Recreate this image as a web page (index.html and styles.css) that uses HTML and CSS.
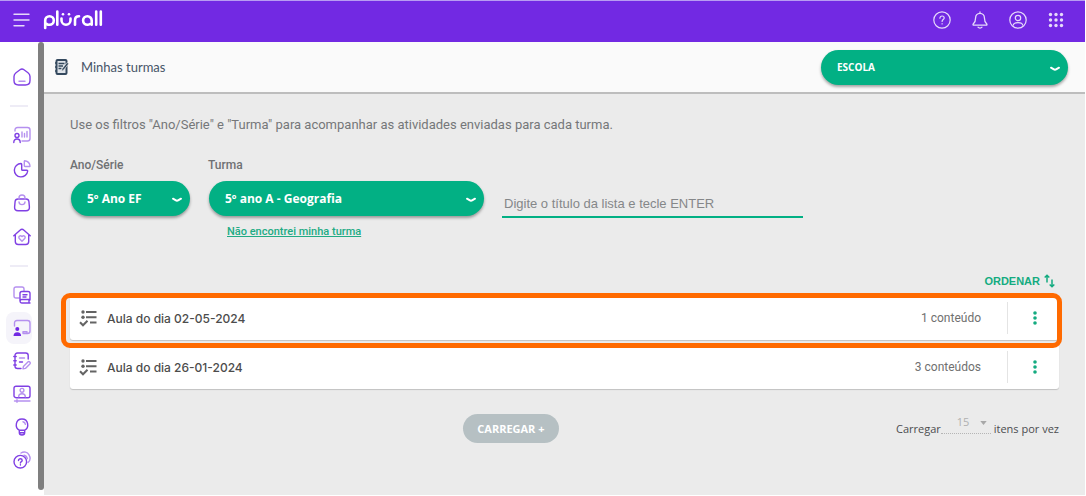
FILE: index.html
```html
<!DOCTYPE html>
<html lang="pt-BR">
<head>
<meta charset="utf-8">
<title>Plurall - Minhas turmas</title>
<link rel="stylesheet" href="styles.css">
</head>
<body>
<div class="app">
  <header class="appbar">
    <button class="icon-btn menu-btn" type="button" aria-label="Menu">
      <svg width="17" height="14" viewBox="0 0 17 14" fill="none" stroke="currentColor" stroke-width="1.4" stroke-linecap="round"><path d="M1 1.200h15M1 7h15M1 12.800h10"/></svg>
    </button>
    <a class="brand" href="#" aria-label="plurall">
      <svg width="60" height="20" viewBox="0 0 60 20" fill="none" stroke="#fff" stroke-width="2.600" stroke-linecap="round"><path d="M2.200 18v-7.500a4.300 4.300 0 1 1 4.300 4.300c-1 0-2-.3-2.700-.9M14.300 1.500v13.300M18.500 8.500v1.700a4.500 4.500 0 0 0 9 0V8.500M32 14.800v-4.500c0-2.600 1.600-4 4-4M48.700 14.800v-4.300a4.300 4.300 0 1 0-4.300 4.300c1 0 1.800-.3 2.500-.8M53.200 1.500v13.300M57.800 1.500v13.300"/><circle cx="20" cy="4.300" r="1.300" fill="#fff" stroke="none"/><circle cx="26" cy="4.300" r="1.300" fill="#fff" stroke="none"/></svg>
    </a>
    <div class="appbar-actions">
      <button class="icon-btn" type="button" aria-label="Ajuda">
        <svg width="18" height="18" viewBox="0 0 18 18" fill="none" stroke="currentColor" stroke-width="1.200" stroke-linecap="round"><circle cx="9" cy="9" r="8.200"/><path d="M6.900 7.200c0-1.300.9-2.200 2.200-2.200s2.100.8 2.100 2c0 1.600-2.100 1.600-2.100 3.400M9.100 12.700v.2"/></svg>
      </button>
      <button class="icon-btn" type="button" aria-label="Notificações">
        <svg width="18" height="18" viewBox="0 0 18 18" fill="none" stroke="currentColor" stroke-width="1.300" stroke-linecap="round" stroke-linejoin="round"><path d="M9 1v1.300M9 2.300c-2.800 0-4.400 2-4.400 4.500 0 3.400-.8 4.800-2.200 6-.7.700-.4 1.400.4 1.400h12.400c.8 0 1.100-.7.400-1.400-1.400-1.200-2.200-2.600-2.200-6 0-2.500-1.600-4.500-4.400-4.500zM7 16.200c1 1.200 3 1.200 4 0"/></svg>
      </button>
      <button class="icon-btn" type="button" aria-label="Perfil">
        <svg width="18" height="18" viewBox="0 0 18 18" fill="none" stroke="currentColor" stroke-width="1.200"><circle cx="9" cy="9" r="8.200"/><circle cx="9" cy="7" r="2.700"/><path d="M4.300 14.500c0-2 1.700-2.900 4.700-2.900s4.700.9 4.700 2.900"/></svg>
      </button>
      <button class="icon-btn" type="button" aria-label="Aplicativos">
        <svg width="18" height="18" viewBox="0 0 18 18" fill="currentColor"><circle cx="3.500" cy="3.500" r="1.700"/><circle cx="9" cy="3.500" r="1.700"/><circle cx="14.500" cy="3.500" r="1.700"/><circle cx="3.500" cy="9" r="1.700"/><circle cx="9" cy="9" r="1.700"/><circle cx="14.500" cy="9" r="1.700"/><circle cx="3.500" cy="14.500" r="1.700"/><circle cx="9" cy="14.500" r="1.700"/><circle cx="14.500" cy="14.500" r="1.700"/></svg>
      </button>
    </div>
  </header>

  <div class="body">
    <aside class="sidebar">
      <nav class="nav" aria-label="Principal">
        <a class="nav-item" href="#" aria-label="Início"><svg class="nav-icon" viewBox="0 0 18 18"><path d="M7 1.800 3 4.700C1.600 5.800 1 6.900 1 8.500v4C1 15.600 2.400 17 5.500 17h7c3.100 0 4.500-1.400 4.500-4.500v-4c0-1.600-.6-2.700-2-3.800l-4-2.900c-1.400-1-2.600-1-4 0z"/><path class="soft" d="M6 13.200h6"/></svg></a>
        <hr class="nav-divider">
        <div class="nav-group nav-group-wide">
          <a class="nav-item" href="#" aria-label="Desempenho"><svg class="nav-icon" viewBox="0 0 18 18"><path class="soft" d="M2 5V4c0-1.600.9-2.500 2.500-2.500h10C16.100 1.500 17 2.400 17 4v8.500c0 1.600-.9 2.500-2.500 2.500H9M9 6v5M11.500 7.500V11M14 5.500V11"/><circle cx="4" cy="9.500" r="2"/><path d="M.8 16.500c0-2.200 1-3.500 3.200-3.500s3.200 1.300 3.200 3.500"/></svg></a>
          <a class="nav-item" href="#" aria-label="Relatórios"><svg class="nav-icon" viewBox="0 0 18 18"><path d="M8 3.500a6.700 6.700 0 1 0 6.700 7.500c0-.5-.2-.8-.8-.8H9.500c-.6 0-.8-.2-.8-.8V4.300c0-.5-.2-.8-.7-.8z"/><path class="soft" d="M11.300 1.200c0-.4.300-.6.700-.5 2.800.5 4.600 2.300 5 5 .1.500-.1.800-.6.800H12c-.5 0-.7-.2-.7-.7z"/></svg></a>
          <a class="nav-item" href="#" aria-label="Loja"><svg class="nav-icon" viewBox="0 0 18 18"><path d="M5 5h8c1.800 0 2.700.8 2.900 2.500l.5 5.500c.2 2.500-1 3.800-3.400 3.800H5c-2.400 0-3.600-1.300-3.400-3.800l.5-5.500C2.300 5.800 3.200 5 5 5z"/><path class="soft" d="M6 5V4a3 3 0 0 1 6 0v1M6 8c.3 3.500 5.700 3.500 6 0"/></svg></a>
          <a class="nav-item" href="#" aria-label="Família"><svg class="nav-icon" viewBox="0 0 18 18"><path d="M.8 7.800 7 2.200c1.500-1.300 2.500-1.300 4 0l6.200 5.600M2.300 7v6.500c0 2 1 3 3 3h7.400c2 0 3-1 3-3V7"/><path class="soft" d="M9 13.200 6.300 10.500c-1.500-1.800 1-4 2.700-1.900 1.700-2.100 4.200.1 2.700 1.900z"/></svg></a>
        </div>
        <hr class="nav-divider">
        <div class="nav-group">
          <a class="nav-item" href="#" aria-label="Livros"><svg class="nav-icon" viewBox="0 0 18 18"><path class="soft" d="M6 12H3c-1.300 0-2-.7-2-2V3c0-1.300.7-2 2-2h6c1.300 0 2 .7 2 2v2"/><path d="M17 14V7.500c0-1.300-.7-2-2-2H9c-1.300 0-2 .7-2 2V15M17 13.500H8.700c-2.200 0-2.200 3.500 0 3.500H17M10 8.700h4M10 11h3M16 13.700V17"/></svg></a>
          <a class="nav-item nav-item-active" href="#" aria-label="Minhas turmas" aria-current="page"><svg class="nav-icon" viewBox="0 0 18 18"><path class="soft" d="M1.500 7V4c0-1.600.9-2.500 2.500-2.500h10.500C16.100 1.500 17 2.400 17 4v8c0 1.600-.9 2.500-2.500 2.500H10M10 14v-1.200h4V14"/><circle class="solid" cx="4.300" cy="10" r="2"/><path class="solid" d="M.5 17c0-2.500 1.300-3.800 3.800-3.800S8.100 14.500 8.100 17z"/></svg></a>
          <a class="nav-item" href="#" aria-label="Diário"><svg class="nav-icon" viewBox="0 0 18 18"><path d="M8 16.500H4.500c-1.600 0-2.500-.9-2.500-2.500V3.500C2 1.900 2.900 1 4.500 1h8.200c1.600 0 2.500.9 2.500 2.500V7M.8 4.500h2.400M.8 8.700h2.400M.8 13h2.400M6.500 10h3"/><path class="soft" d="M6.500 6h5M10 16.800l.4-2.400 4.500-4.500c1.300-1 3 .7 2 2l-4.500 4.500z"/></svg></a>
          <a class="nav-item" href="#" aria-label="Aulas ao vivo"><svg class="nav-icon" viewBox="0 0 18 18"><rect x="1" y="1.200" width="16" height="11.500" rx="2"/><circle class="soft" cx="9" cy="5.300" r="1.900"/><path class="soft" d="M5.700 11.800c0-2 1.200-3 3.300-3s3.300 1 3.300 3M1.500 16H17M4 14.700v2.600"/></svg></a>
          <a class="nav-item" href="#" aria-label="Dicas"><svg class="nav-icon" viewBox="0 0 18 18"><path d="M6.200 12.200C1.500 9.500 2.500 1 9 1s7.500 8.500 2.800 11.200zM6.300 12.500v2c0 1.700.8 2.500 2.700 2.500s2.700-.8 2.700-2.500v-2M6.500 14.700h5"/><path class="soft" d="M10 3.800c1.500.3 2.200 1.200 2.400 2.500"/></svg></a>
          <a class="nav-item" href="#" aria-label="Suporte"><svg class="nav-icon" viewBox="0 0 18 18"><circle cx="7.300" cy="10.700" r="6.300"/><path d="M5.500 9.500c0-2.300 3.700-2.200 3.700 0 0 1.200-1.800 1.200-1.800 2.500M7.400 13.800v.2"/><path class="soft" d="M8 2c3-2 6.500-.8 8 1.800 1.700 3 1 6-1 7.700M11 4.300c1.700.4 3 1.700 3.300 3.300"/></svg></a>
        </div>
      </nav>
      <div class="scroll-thumb"></div>
    </aside>

    <main class="main">
      <div class="titlebar">
        <svg class="title-icon" width="14" height="16" viewBox="0 0 14 16"><rect x="1.500" y="1" width="10" height="14" rx="1" fill="#dfe4ea" stroke="#34495e" stroke-width="2"/><path d="M0 4h2M0 8h2M0 12h2M3.500 4.500h6M3.500 7h4.500M3.500 9.500h3" stroke="#34495e" stroke-width="1.300"/><path d="m6.500 12.500.6-2.800 5-6.200 1.600 1.300-5 6.200z" fill="#34495e" stroke="#fafafa" stroke-width=".6"/></svg>
        <h1 class="title">Minhas turmas</h1>
        <div class="pill pill-school">
          <select class="pill-select" aria-label="Escola"><option>ESCOLA</option></select>
          <svg class="pill-arrow" viewBox="0 0 12 6"><path d="M2 1.700 4.500 3.200c1 .6 2 .6 3 0L10 1.700"/></svg>
        </div>
      </div>

      <div class="content">
        <p class="intro">Use os filtros "Ano/Série" e "Turma" para acompanhar as atividades enviadas para cada turma.</p>
        <div class="filters">
          <div class="field field-year">
            <label class="field-label" for="ano">Ano/Série</label>
            <div class="pill">
              <select class="pill-select" id="ano"><option>5º Ano EF</option></select>
              <svg class="pill-arrow" viewBox="0 0 12 6"><path d="M2 1.700 4.500 3.200c1 .6 2 .6 3 0L10 1.700"/></svg>
            </div>
          </div>
          <div class="field field-class">
            <label class="field-label" for="turma">Turma</label>
            <div class="pill">
              <select class="pill-select" id="turma"><option>5º ano A - Geografia</option></select>
              <svg class="pill-arrow" viewBox="0 0 12 6"><path d="M2 1.700 4.500 3.200c1 .6 2 .6 3 0L10 1.700"/></svg>
            </div>
            <a class="help-link" href="#">Não encontrei minha turma</a>
          </div>
          <input class="search" type="text" aria-label="Título da lista" placeholder="Digite o título da lista e tecle ENTER">
        </div>

        <div class="sort-row">
          <button class="sort" type="button">ORDENAR
            <svg width="11" height="14" viewBox="0 0 11 14" fill="none" stroke="currentColor" stroke-width="1.500"><path d="M3 8.500v-7M.7 3.500 3 1.200l2.300 2.300M8 5.500v7M5.700 10.500 8 12.800l2.300-2.300"/></svg>
          </button>
        </div>

        <ul class="lessons">
          <li class="lesson lesson-highlight">
            <svg class="lesson-icon" viewBox="0 0 18 18"><circle cx="4" cy="3" r="1.700"/><circle cx="4" cy="8.200" r="1.700"/><path d="M7 3h10.500M7 8.200h10.500M11 13.500h6.500M1 13.300l3 3 4.500-4.500"/></svg>
            <span class="lesson-name">Aula do dia 02-05-2024</span>
            <span class="lesson-count">1 conteúdo</span>
            <button class="more" type="button" aria-label="Mais opções"><svg width="4" height="14" viewBox="0 0 4 14" fill="currentColor"><circle cx="2" cy="2" r="1.800"/><circle cx="2" cy="7" r="1.800"/><circle cx="2" cy="12" r="1.800"/></svg></button>
          </li>
          <li class="lesson">
            <svg class="lesson-icon" viewBox="0 0 18 18"><circle cx="4" cy="3" r="1.700"/><circle cx="4" cy="8.200" r="1.700"/><path d="M7 3h10.500M7 8.200h10.500M11 13.500h6.500M1 13.300l3 3 4.500-4.500"/></svg>
            <span class="lesson-name">Aula do dia 26-01-2024</span>
            <span class="lesson-count">3 conteúdos</span>
            <button class="more" type="button" aria-label="Mais opções"><svg width="4" height="14" viewBox="0 0 4 14" fill="currentColor"><circle cx="2" cy="2" r="1.800"/><circle cx="2" cy="7" r="1.800"/><circle cx="2" cy="12" r="1.800"/></svg></button>
          </li>
        </ul>

        <div class="pager">
          <button class="load" type="button" disabled>CARREGAR +</button>
          <div class="page-size">
            <label for="itens">Carregar</label>
            <div class="size-box">
              <select class="size-select" id="itens"><option>15</option></select>
              <svg class="size-arrow" viewBox="0 0 8 5"><path d="M0 0h8L4 5z"/></svg>
            </div>
            <span>itens por vez</span>
          </div>
        </div>
      </div>
    </main>
  </div>
</div>
</body>
</html>
```

FILE: styles.css
```css
* { box-sizing: border-box; }

body {
  margin: 0;
  background: #fff;
  font-family: "Open Sans", "Noto Sans", sans-serif;
  color: #5f6163;
}

button, select, input { font-family: inherit; }

button {
  border: 0;
  padding: 0;
  background: none;
  color: inherit;
  cursor: pointer;
}

.app {
  display: flex;
  flex-direction: column;
  min-height: 100vh;
  padding: 0 1px 1px 0;
}

/* Top bar */
.appbar {
  display: flex;
  align-items: center;
  height: 42px;
  padding: 0 20px 4px 13px;
  border-top: 1px solid #b89cf2;
  background: #7229e3;
  color: #e6dafa;
}

.icon-btn { display: flex; }

.brand {
  display: flex;
  margin-left: 13px;
}

.appbar-actions {
  display: flex;
  gap: 20px;
  margin-left: auto;
}

.body {
  display: flex;
  flex: 1;
}

/* Sidebar */
.sidebar {
  display: flex;
  flex: none;
  width: 44px;
}

.nav {
  flex: 1;
  padding: 19px 6px 0;
}

.nav-group {
  display: flex;
  flex-direction: column;
  gap: 1px;
}

.nav-group-wide { gap: 2px; }

.nav-item {
  display: flex;
  align-items: center;
  justify-content: flex-end;
  height: 32px;
  padding-right: 1px;
  border-radius: 8px;
}

.nav-item-active { background: #f5f4fa; }

.nav-icon {
  width: 18px;
  height: 18px;
  fill: none;
  stroke: #8040e4;
  stroke-width: 1.4;
  stroke-linecap: round;
  stroke-linejoin: round;
}

.nav-icon .soft { stroke: #b590ef; }

.nav-icon .solid {
  fill: #7229e3;
  stroke: none;
}

.nav-divider {
  height: 2px;
  margin: 12px 4px;
  border: 0;
  background: #eeecf6;
}

.scroll-thumb {
  width: 6px;
  margin-bottom: 5px;
  border-radius: 3px;
  background: #7f7f7f;
}

/* Page */
.main {
  flex: 1;
  min-width: 0;
  background: #ebebeb;
}

.titlebar {
  display: flex;
  align-items: center;
  height: 52px;
  padding: 0 17px 0 11px;
  border-bottom: 2px solid #bdbdbd;
  background: #fafafa;
}

.title {
  margin: 0 auto 0 12px;
  color: #465467;
  font-family: Lato, sans-serif;
  font-size: 13px;
  font-weight: 400;
}

.pill {
  position: relative;
  display: flex;
  height: 35px;
  border-radius: 18px;
  background: #02b084;
  box-shadow: 0 2px 3px rgba(0, 0, 0, 0.35);
}

.field .pill { margin-left: 1px; }

.pill-school { width: 247px; }

.pill-select {
  flex: 1;
  min-width: 0;
  padding: 0 32px 0 16px;
  border: 0;
  border-radius: inherit;
  background: transparent;
  color: #fff;
  font-size: 12px;
  font-weight: 700;
  appearance: none;
}

.pill-school .pill-select { font-size: 10px; }

.pill-arrow {
  position: absolute;
  top: 16px;
  right: 7px;
  width: 12px;
  height: 6px;
  fill: none;
  stroke: #fff;
  stroke-width: 2;
  stroke-linecap: round;
  pointer-events: none;
}

.content { padding: 21px 26px 0; }

.intro {
  margin: 0;
  color: #757779;
  font-family: Roboto, sans-serif;
  font-size: 13px;
  line-height: 20px;
}

.filters {
  display: flex;
  align-items: flex-start;
  gap: 18px;
  margin-top: 21px;
}

.field {
  display: flex;
  flex-direction: column;
}

.field-year { width: 120px; }
.field-class { width: 276px; }

.field-label {
  margin-bottom: 7px;
  color: #6f7173;
  font-family: Roboto, sans-serif;
  font-size: 12px;
  font-weight: 500;
  line-height: 18px;
}

.help-link {
  align-self: flex-start;
  margin: 8px 0 0 19px;
  color: #22ab84;
  font-family: Roboto, sans-serif;
  font-size: 11px;
  font-weight: 500;
  line-height: 16px;
}

.search {
  width: 301px;
  height: 27px;
  margin-top: 35px;
  padding: 0 2px;
  border: 0;
  border-bottom: 2px solid #02b084;
  background: transparent;
  color: #5f6163;
  font-family: "Liberation Sans", sans-serif;
  font-size: 13px;
}

.search::placeholder {
  color: #858789;
  opacity: 1;
}

.sort-row {
  display: flex;
  justify-content: flex-end;
  margin-top: 31px;
  padding-right: 4px;
}

.sort {
  display: flex;
  align-items: center;
  gap: 4px;
  height: 20px;
  color: #14ab80;
  font-family: "Liberation Sans", sans-serif;
  font-size: 11px;
  font-weight: 700;
}

/* Lesson list */
.lessons {
  display: flex;
  flex-direction: column;
  gap: 5px;
  margin: 5px 0 0;
  padding: 0;
  list-style: none;
}

.lesson {
  position: relative;
  display: flex;
  align-items: center;
  height: 44px;
  padding-left: 9px;
  border-radius: 3px;
  background: #fff;
  box-shadow: 0 1px 1px rgba(0, 0, 0, 0.18);
  font-family: Inter, sans-serif;
  font-size: 12px;
}

.lesson-highlight { z-index: 1; }

.lesson-highlight::after {
  content: "";
  position: absolute;
  inset: -3px -3px -8px -9px;
  border: 5px solid #ff6a00;
  border-radius: 9px;
  pointer-events: none;
}

.lesson-icon {
  width: 18px;
  height: 18px;
  fill: #646464;
  stroke: #646464;
  stroke-width: 2;
}

.lesson-icon path { fill: none; }
.lesson-icon circle { stroke: none; }

.lesson-name {
  margin-left: 10px;
  color: #4c4c4c;
  font-weight: 500;
}

.lesson-count {
  margin-left: auto;
  color: #707070;
  font-family: Roboto, sans-serif;
}

.more {
  display: flex;
  align-items: center;
  justify-content: center;
  width: 52px;
  height: 32px;
  margin-left: 26px;
  padding-left: 3px;
  border-left: 1px solid #e4e4e4;
  color: #14ab80;
}

/* Footer controls */
.pager {
  display: grid;
  grid-template-columns: 11fr auto 14fr;
  align-items: center;
  margin-top: 25px;
}

.load {
  grid-column: 2;
  width: 96px;
  height: 29px;
  border-radius: 15px;
  background: #b6c0c3;
  color: #fff;
  font-size: 11px;
  font-weight: 700;
}

.page-size {
  display: flex;
  justify-content: flex-end;
  align-items: center;
  font-size: 11px;
  line-height: 16px;
  color: #4c4d4f;
}

.size-box {
  position: relative;
  align-self: flex-start;
  width: 50px;
  height: 20px;
  margin: 0 3px 9px 0;
  border-bottom: 1px dotted #b5b5b5;
}

.size-select {
  width: 100%;
  height: 14px;
  padding: 0 16px;
  border: 0;
  background: transparent;
  color: #b0b0b0;
  font-size: 11px;
  appearance: none;
}

.size-arrow {
  position: absolute;
  top: 7px;
  right: 4px;
  width: 7px;
  height: 4px;
  fill: #a8a8a8;
  pointer-events: none;
}
```
